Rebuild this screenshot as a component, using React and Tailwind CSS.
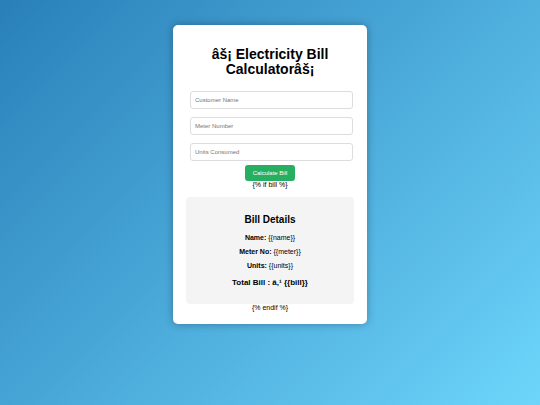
const fields = [
  { id: "name", label: "Customer Name" },
  { id: "meter", label: "Meter Number" },
  { id: "units", label: "Units Consumed" },
];

const details = [
  { label: "Name:", value: "{{name}}" },
  { label: "Meter No:", value: "{{meter}}" },
  { label: "Units:", value: "{{units}}" },
];

export default function App() {
  return (
    <main className="min-h-screen bg-linear-135 from-[#2980b9] to-[#6dd5fa] px-4 py-[25px] font-['Liberation_Sans',Arial,sans-serif] text-black">
      <section className="mx-auto w-full max-w-[194px] rounded-[5px] bg-white px-[13px] pt-[22px] pb-3 text-center text-[7px] leading-2 shadow-[0_0_8px_rgba(0,0,0,0.3)]">
        <h1 className="text-[14px] leading-[15px] font-bold">âš¡ Electricity Bill Calculatorâš¡</h1>

        <form onSubmit={(e) => e.preventDefault()} className="mt-3.5">
          <div className="flex flex-col gap-2 pr-px pl-1">
            {fields.map((f) => (
              <input
                key={f.id}
                name={f.id}
                aria-label={f.label}
                placeholder={f.label}
                className="h-[18px] w-full rounded-[3px] border border-[#ddd] px-1 text-[6px] placeholder:text-[#757575]"
              />
            ))}
          </div>
          <button type="submit" className="mt-1 h-4 rounded-[3px] bg-[#27ae60] px-2 text-[6px] text-white">
            Calculate Bill
          </button>
        </form>

        <p>{"{% if bill %}"}</p>

        <div className="mt-2 rounded-[4px] bg-[#f4f4f4] px-3 pt-[17px] pb-[17px]">
          <h2 className="text-[10px] leading-3 font-bold">Bill Details</h2>
          <div className="mt-2 flex flex-col gap-1.5">
            {details.map((d) => (
              <p key={d.label}>
                <b>{d.label}</b> {d.value}
              </p>
            ))}
          </div>
          <h3 className="mt-[9px] text-[8px] leading-2 font-bold">{"Total Bill : â‚¹ {{bill}}"}</h3>
        </div>

        <p>{"{% endif %}"}</p>
      </section>
    </main>
  );
}
